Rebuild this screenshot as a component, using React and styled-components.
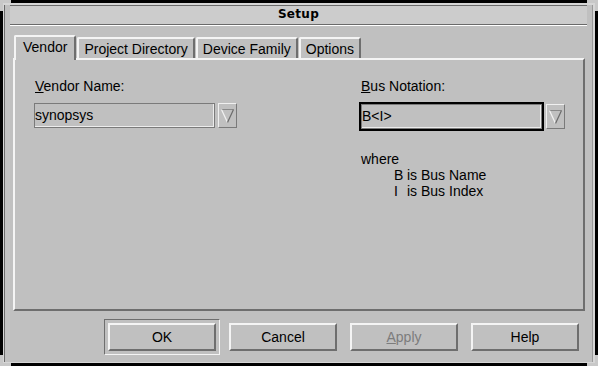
import React from "react";
import styled, { createGlobalStyle } from "styled-components";

const Global = createGlobalStyle`
  html, body { margin: 0; padding: 0; background: #000; }
  body { font-family: "Liberation Sans", Arial, sans-serif; font-size: 14px; color: #000; }
  * { box-sizing: border-box; }
`;

const Window = styled.div`
  position: relative;
  width: 598px;
  height: 366px;
  background: #000;
  padding: 3px 3px 3px 3px;
`;

const Frame = styled.div`
  display: flex;
  flex-direction: column;
  height: 100%;
  background: #c0c0c0;
  border-top: 2px solid #d6d6d6;
  border-left: 1px solid #d6d6d6;
  border-right: 2px solid #d6d6d6;
  border-bottom: 1px solid #d6d6d6;
  box-shadow: inset 1px 0 0 #6a6a6a, inset -1px 0 0 #9a9a9a;
`;

const TitleBar = styled.div`
  height: 20px;
  margin: 0 6px 0 6px;
  background: #cccccc;
  border-top: 1px solid #6a6a6a;
  border-bottom: 1px solid #6a6a6a;
  box-shadow: 0 1px 0 #ffffff;
  font-family: "DejaVu Sans", Verdana, sans-serif;
  font-weight: bold;
  font-size: 12px;
  line-height: 17px;
  text-align: center;
  letter-spacing: 0.3px;
`;

const Content = styled.div`
  display: flex;
  flex-direction: column;
  padding: 10px 8px 0 9px;
`;

const TabRow = styled.div`
  display: flex;
  align-items: flex-end;
  gap: 1px;
  height: 23px;
  padding-left: 1px;
  position: relative;
  z-index: 1;
`;

const Tab = styled.div`
  height: ${(p) => (p.$active ? "25px" : "21px")};
  margin-bottom: ${(p) => (p.$active ? "-2px" : "0")};
  padding: ${(p) => (p.$active ? "2px 7px 0 7px" : "2px 5px 0 5px")};
  background: #c0c0c0;
  border-top: 2px solid #f4f4f4;
  border-left: 2px solid #f4f4f4;
  border-right: 2px solid #6e6e6e;
  border-top-left-radius: 2px;
  border-top-right-radius: 2px;
  line-height: 16px;
  white-space: nowrap;
`;

const Panel = styled.div`
  height: 253px;
  border-top: 2px solid #f4f4f4;
  border-left: 2px solid #f4f4f4;
  border-right: 2px solid #6e6e6e;
  border-bottom: 2px solid #6e6e6e;
  padding: 18px 0 0 19px;
  display: grid;
  grid-template-columns: 327px 1fr;
  align-items: start;
`;

const Column = styled.div`
  display: flex;
  flex-direction: column;
`;

const Label = styled.div`
  line-height: 16px;
  padding-left: ${(p) => (p.$shift ? "1px" : "0")};
  margin-bottom: 9px;
  white-space: nowrap;
`;

const Mnemonic = styled.span`
  text-decoration: underline;
  text-underline-offset: 1px;
  text-decoration-thickness: 1px;
`;

const ComboRow = styled.div`
  display: flex;
  align-items: flex-start;
  gap: ${(p) => (p.$focused ? "4px" : "3px")};
  margin-top: ${(p) => (p.$focused ? "1px" : "0")};
`;

const Field = styled.div`
  width: 181px;
  height: 25px;
  border: 1px solid #7a7a7a;
  box-shadow: inset -1px -1px 0 #ececec;
  line-height: 22px;
  padding-left: 0;
  white-space: nowrap;
  outline: ${(p) => (p.$focused ? "2px solid #000" : "none")};
`;

const ArrowButton = styled.div`
  width: 19px;
  height: 25px;
  border-top: 1px solid #f0f0f0;
  border-left: 1px solid #f0f0f0;
  border-right: 1px solid #7a7a7a;
  border-bottom: 1px solid #7a7a7a;
  display: flex;
  align-items: center;
  justify-content: center;
`;

const Where = styled.div`
  margin-top: 22px;
  line-height: 16px;
`;

const WhereLine = styled.div`
  padding-left: ${(p) => (p.$indent ? "33px" : "0")};
  white-space: pre;
`;

const Sym = styled.span`
  display: inline-block;
  width: 13px;
`;

const ButtonRow = styled.div`
  display: flex;
  gap: 13px;
  padding: 12px 0 0 95px;
`;

const DefaultRing = styled.div`
  margin: -4px;
  padding: 3px;
  border-top: 1px solid #6e6e6e;
  border-left: 1px solid #6e6e6e;
  border-right: 1px solid #f4f4f4;
  border-bottom: 1px solid #f4f4f4;
  display: flex;
`;

const Button = styled.div`
  width: 108px;
  height: 28px;
  border-top: 2px solid #f4f4f4;
  border-left: 2px solid #f4f4f4;
  border-right: 2px solid #6e6e6e;
  border-bottom: 2px solid #6e6e6e;
  display: flex;
  align-items: center;
  justify-content: center;
  color: ${(p) => (p.$disabled ? "#7c7c7c" : "#000")};
  line-height: 16px;
`;

const Corner = styled.div`
  position: absolute;
  width: 11px;
  height: 11px;
  ${(p) => (p.$top ? "top: 0;" : "bottom: 0;")}
  ${(p) => (p.$left ? "left: 0;" : "right: 0;")}
  border-${(p) => (p.$top ? "top" : "bottom")}: 3px solid #c8c8c8;
  border-${(p) => (p.$left ? "left" : "right")}: 3px solid #c8c8c8;
`;

function Arrow() {
  return (
    <svg width="15" height="17" viewBox="0 0 15 17">
      <line x1="1.5" y1="2.5" x2="13.5" y2="2.5" stroke="#8a8a8a" strokeWidth="1" />
      <line x1="1.5" y1="2.5" x2="7.5" y2="15.5" stroke="#f2f2f2" strokeWidth="1.2" />
      <line x1="13.5" y1="2.5" x2="7.5" y2="15.5" stroke="#6a6a6a" strokeWidth="1.2" />
    </svg>
  );
}

function Combo({ value, focused }) {
  return (
    <ComboRow $focused={focused}>
      <Field $focused={focused}>{value}</Field>
      <ArrowButton>
        <Arrow />
      </ArrowButton>
    </ComboRow>
  );
}

export default function App() {
  return (
    <>
      <Global />
      <Window>
        <Frame>
          <TitleBar>Setup</TitleBar>
          <Content>
            <TabRow>
              <Tab $active>Vendor</Tab>
              <Tab>Project Directory</Tab>
              <Tab>Device Family</Tab>
              <Tab>Options</Tab>
            </TabRow>
            <Panel>
              <Column>
                <Label $shift>
                  <Mnemonic>V</Mnemonic>endor Name:
                </Label>
                <Combo value="synopsys" />
              </Column>
              <Column>
                <Label>
                  <Mnemonic>B</Mnemonic>us Notation:
                </Label>
                <Combo value="B<I>" focused />
                <Where>
                  <WhereLine>where</WhereLine>
                  <WhereLine $indent>
                    <Sym>B</Sym>is Bus Name
                  </WhereLine>
                  <WhereLine $indent>
                    <Sym>I</Sym>is Bus Index
                  </WhereLine>
                </Where>
              </Column>
            </Panel>
            <ButtonRow>
              <DefaultRing>
                <Button>OK</Button>
              </DefaultRing>
              <Button>Cancel</Button>
              <Button $disabled>
                <Mnemonic>A</Mnemonic>pply
              </Button>
              <Button>Help</Button>
            </ButtonRow>
          </Content>
        </Frame>
        <Corner $top $left />
        <Corner $top />
        <Corner $left />
        <Corner />
      </Window>
    </>
  );
}
